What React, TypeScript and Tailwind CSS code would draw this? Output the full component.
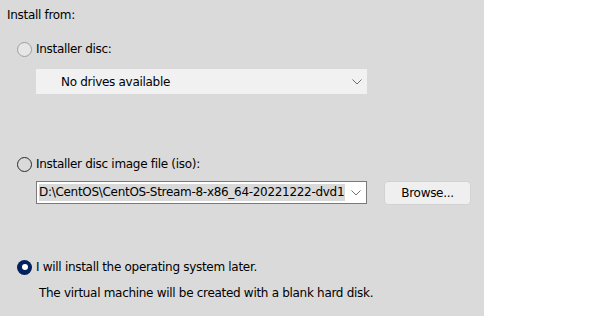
import React from "react";

function Chevron() {
  return (
    <svg width="10" height="6" viewBox="0 0 10 6" className="block">
      <path d="M0.5 0.5 L5 5 L9.5 0.5" fill="none" stroke="#6f6f6f" strokeWidth="1" />
    </svg>
  );
}

function Radio({ state }: { state: "disabled" | "off" | "on" }) {
  if (state === "on") {
    return (
      <div className="w-[15px] h-[15px] rounded-full bg-[#00215e] flex items-center justify-center">
        <div className="w-[6px] h-[6px] rounded-full bg-white" />
      </div>
    );
  }
  if (state === "disabled") {
    return <div className="w-[15px] h-[15px] rounded-full border border-[#9e9e9e] bg-[#e6e6e6]" />;
  }
  return <div className="w-[15px] h-[15px] rounded-full border border-[#2b2b2b]" />;
}

export default function App() {
  return (
    <div
      className="flex w-[596px] h-[316px] overflow-hidden bg-white text-[12px] text-black"
      style={{ fontFamily: '"DejaVu Sans", Verdana, sans-serif' }}
    >
      <div className="w-[484px] h-full bg-[#dadada] pt-[7px] pl-[7px] flex flex-col">
        <div className="h-[16px] leading-[16px] tracking-[-0.3px]">Install from:</div>

        <div className="mt-[18px] h-[16px] flex items-center pl-[10px]">
          <Radio state="disabled" />
          <span className="ml-[4px] leading-[16px] tracking-[-0.3px]">Installer disc:</span>
        </div>

        <div className="mt-[12px] ml-[29px] w-[331px] h-[25px] bg-[#f1f1f1] flex items-center pl-[25px] pr-[5px]">
          <span className="flex-1 tracking-[-0.3px]">No drives available</span>
          <Chevron />
        </div>

        <div className="mt-[62px] h-[16px] flex items-center pl-[10px]">
          <Radio state="off" />
          <span className="ml-[4px] leading-[16px] tracking-[-0.3px]">Installer disc image file (iso):</span>
        </div>

        <div className="mt-[9px] h-[24px] flex items-start">
          <div className="ml-[29px] w-[331px] h-[23px] bg-white border border-[#7a7a7a] flex items-center pl-[2px] pr-[5px]">
            <div className="w-[306px] h-[17px] bg-[#d9d9d9] whitespace-nowrap leading-[17px] tracking-[-0.3px]">
              D:\CentOS\CentOS-Stream-8-x86_64-20221222-dvd1
            </div>
            <div className="flex-1" />
            <Chevron />
          </div>
          <button className="ml-[17px] w-[87px] h-[24px] bg-[#efefef] border border-[#d2d2d2] rounded-[4px] flex items-center justify-center tracking-[-0.3px]">
            Browse...
          </button>
        </div>

        <div className="mt-[54px] h-[16px] flex items-center pl-[10px]">
          <Radio state="on" />
          <span className="ml-[4px] leading-[16px] tracking-[-0.3px]">I will install the operating system later.</span>
        </div>

        <div className="mt-[10px] h-[16px] leading-[16px] pl-[32px] tracking-[-0.3px]">
          The virtual machine will be created with a blank hard disk.
        </div>
      </div>
      <div className="flex-1 bg-white" />
    </div>
  );
}
